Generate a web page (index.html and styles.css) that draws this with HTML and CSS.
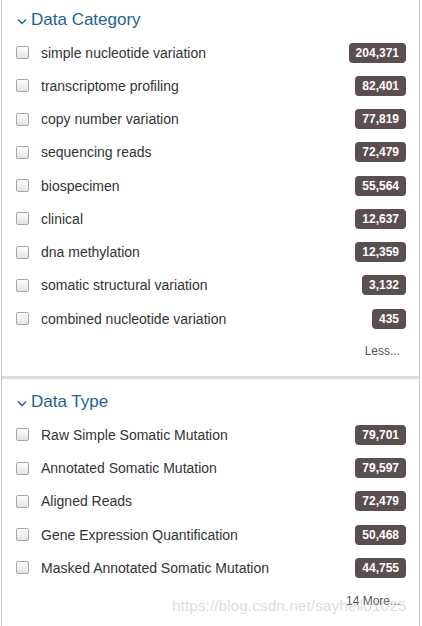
FILE: index.html
```html
<!DOCTYPE html>
<html>
<head>
<meta charset="utf-8">
<link rel="stylesheet" href="styles.css">
</head>
<body>
<div class="panel">
  <section class="facet facet--first">
    <h2 class="facet-title"><svg class="chev" width="10" height="7" viewBox="0 0 10 7"><path d="M1 1.5 L5 5.5 L9 1.5" fill="none" stroke="#1f5f95" stroke-width="1.4"/></svg>Data Category</h2>
    <ul class="rows">
      <li class="row"><span class="cb"></span><span class="label">simple nucleotide variation</span><span class="badge">204,371</span></li>
      <li class="row"><span class="cb"></span><span class="label">transcriptome profiling</span><span class="badge">82,401</span></li>
      <li class="row"><span class="cb"></span><span class="label">copy number variation</span><span class="badge">77,819</span></li>
      <li class="row"><span class="cb"></span><span class="label">sequencing reads</span><span class="badge">72,479</span></li>
      <li class="row"><span class="cb"></span><span class="label">biospecimen</span><span class="badge">55,564</span></li>
      <li class="row"><span class="cb"></span><span class="label">clinical</span><span class="badge">12,637</span></li>
      <li class="row"><span class="cb"></span><span class="label">dna methylation</span><span class="badge">12,359</span></li>
      <li class="row"><span class="cb"></span><span class="label">somatic structural variation</span><span class="badge">3,132</span></li>
      <li class="row"><span class="cb"></span><span class="label">combined nucleotide variation</span><span class="badge">435</span></li>
    </ul>
    <div class="more">Less...</div>
  </section>
  <section class="facet">
    <h2 class="facet-title"><svg class="chev" width="10" height="7" viewBox="0 0 10 7"><path d="M1 1.5 L5 5.5 L9 1.5" fill="none" stroke="#1f5f95" stroke-width="1.4"/></svg>Data Type</h2>
    <ul class="rows">
      <li class="row"><span class="cb"></span><span class="label">Raw Simple Somatic Mutation</span><span class="badge">79,701</span></li>
      <li class="row"><span class="cb"></span><span class="label">Annotated Somatic Mutation</span><span class="badge">79,597</span></li>
      <li class="row"><span class="cb"></span><span class="label">Aligned Reads</span><span class="badge">72,479</span></li>
      <li class="row"><span class="cb"></span><span class="label">Gene Expression Quantification</span><span class="badge">50,468</span></li>
      <li class="row"><span class="cb"></span><span class="label">Masked Annotated Somatic Mutation</span><span class="badge">44,755</span></li>
    </ul>
    <div class="more">14 More...</div>
  </section>
</div>
<div class="watermark">https://blog.csdn.net/sayhello1025</div>
</body>
</html>
```
FILE: styles.css
```css
html, body {
  margin: 0;
  padding: 0;
  background: #fff;
  font-family: "Liberation Sans", Arial, sans-serif;
  height: 626px;
  overflow: hidden;
}
.panel {
  margin-left: 1px;
  width: 419px;
  border-left: 1px solid #c8c8c8;
  border-right: 1px solid #c8c8c8;
  min-height: 626px;
  box-sizing: border-box;
}
.facet {
  padding: 11px 13px 15px 13px;
}
.facet--first {
  padding-top: 8px;
  border-bottom: 3px solid #dcdcdc;
}
.facet-title {
  margin: 0 0 4px 0;
  height: 24px;
  line-height: 24px;
  font-size: 17px;
  font-weight: normal;
  color: #1f5f95;
  display: flex;
  align-items: center;
}
.chev {
  margin-left: 2px;
  margin-right: 4px;
  margin-top: 2px;
}
.rows {
  list-style: none;
  margin: 0;
  padding: 0;
}
.row {
  height: 33.25px;
  display: flex;
  align-items: center;
}
.cb {
  width: 11px;
  height: 11px;
  border: 1px solid #a6a6a6;
  border-radius: 2px;
  background: linear-gradient(#fdfdfd, #e4e4e4);
  margin-left: 1px;
  flex: none;
}
.label {
  margin-left: 12px;
  font-size: 14px;
  color: #333;
  flex: 1;
}
.badge {
  background: #5a4e4e;
  color: #fff;
  font-weight: bold;
  font-size: 12px;
  height: 20px;
  line-height: 20px;
  padding: 0 7px;
  border-radius: 4px;
}
.more {
  margin-top: 6px;
  height: 20px;
  line-height: 20px;
  text-align: right;
  font-size: 12px;
  color: #555;
  padding-right: 6px;
}
.watermark {
  position: absolute;
  left: 172px;
  top: 597px;
  font-size: 15.5px;
  color: rgba(190, 190, 190, 0.55);
  white-space: nowrap;
  pointer-events: none;
}
```
